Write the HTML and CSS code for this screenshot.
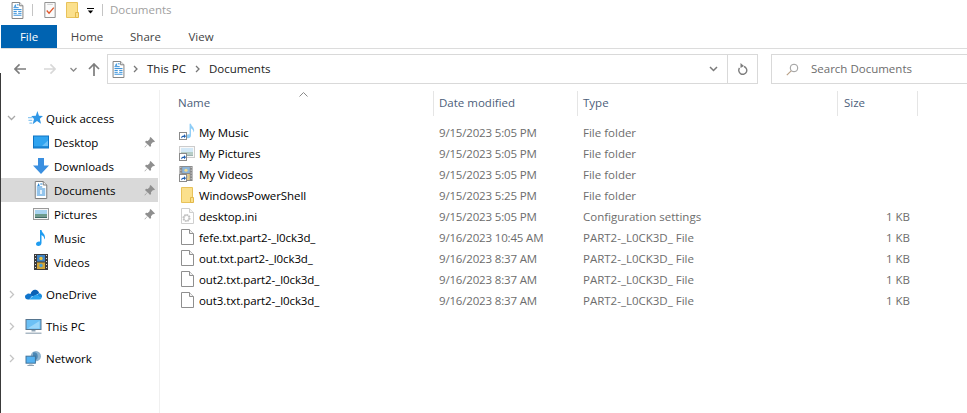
FILE: index.html
```html
<!DOCTYPE html>
<html lang="en">
<head>
<meta charset="utf-8">
<title>Documents</title>
<link rel="stylesheet" href="styles.css">
</head>
<body>
<svg class="defs" width="0" height="0" aria-hidden="true">
  <defs>
    <symbol id="i-doc" viewBox="2 0 12.500 18">
      <path d="M2.500.5h8l3.500 3.500v13.500H2.500z" fill="#fff" stroke="#7d7d7d"/>
      <path d="M10.500.5v3.500H14" fill="#eee" stroke="#7d7d7d"/>
      <path d="M7.500 3h2M4 6h5.500M4 8h8.500M4 10h3.500M9 10h3.500M4 12h3.500M9 12h3.500M4 14h8.500" stroke="#2a8ad8" stroke-width="1"/>
      <path d="M4.500 5l1.500-3 1 3z" fill="#2a8ad8"/>
    </symbol>
    <symbol id="i-check" viewBox="1 0 12 17">
      <path d="M1.500.5h11v16h-11z" fill="#fbfbfb" stroke="#8a8a8a"/>
      <path d="M4 2.500h6" stroke="#c9c9c9"/>
      <path d="M3.500 9l2.500 3 5-6" fill="none" stroke="#e0562a" stroke-width="1.400"/>
    </symbol>
    <symbol id="i-folder" viewBox="0 0 13 16">
      <path d="M.5.500h11v15H.500z" fill="#fbe08c" stroke="#e8c25a"/>
      <path d="M9.500 15.500v-5h3v5z" fill="#fbe08c" stroke="#e3b94a"/>
    </symbol>
    <symbol id="i-star" viewBox="0 0 16 16">
      <path d="M10 0l1.700 5 4.300.2-3.400 3 1.300 5.300-4.300-2.800-4.600 3.300 1.400-5.500L3.500 5.300 8.300 5z" fill="#2f97e6"/>
      <path d="M0 7h5M.5 10h4M1.500 13h3" stroke="#8cc8f2" stroke-width="1.300"/>
    </symbol>
    <symbol id="i-desktop" viewBox="0 0 16 13">
      <rect x=".5" y=".5" width="15" height="12" fill="#30a4f0" stroke="#0f74c4"/>
      <path d="M1 11h14v1H1z" fill="#0f74c4"/>
      <path d="M9 10.500L15 5v5.500z" fill="#6cc1f7"/>
    </symbol>
    <symbol id="i-down" viewBox="0 0 16 16">
      <path d="M5 0h6v7.500h5L8 16 0 7.500h5z" fill="#3a8fe0"/>
    </symbol>
    <symbol id="i-pic" viewBox="0 0 16 12">
      <rect x=".5" y=".5" width="15" height="11" fill="#f5f5f5" stroke="#9a9a9a"/>
      <path d="M2 2h12v4H2z" fill="#a8d3ef"/>
      <path d="M2 6h12v2.500H2z" fill="#6d9c8c"/>
      <path d="M2 8.500h12V10H2z" fill="#3e6b63"/>
    </symbol>
    <symbol id="i-music" viewBox="0 0 12 16">
      <path d="M5 0h1.500c.5 3 3.500 3.500 3.500 7.500 0 1-.3 1.500-.7 2 .1-2.500-1.300-3.700-2.800-4.500V13c0 1.800-1.500 3-3.200 3C2 16 1 15.200 1 14c0-1.500 1.500-2.500 3-2.500.4 0 .7.100 1 .2z" fill="#1f9cf0"/>
    </symbol>
    <symbol id="i-video" viewBox="0 0 14 16">
      <rect x="0" y="0" width="14" height="16" fill="#3c3c3c"/>
      <path d="M1 1.500h1M1 4.500h1M1 7.500h1M1 10.500h1M1 13.500h1M12 1.500h1M12 4.500h1M12 7.500h1M12 10.500h1M12 13.500h1" stroke="#ddd"/>
      <rect x="3" y="1" width="8" height="6.500" fill="#3f84c4"/>
      <rect x="3" y="8.500" width="8" height="6.500" fill="#d0a53a"/>
      <circle cx="7" cy="4.500" r="1.700" fill="#e8c33f"/>
      <circle cx="7" cy="11.500" r="1.700" fill="#4aa0d8"/>
    </symbol>
    <symbol id="i-pin" viewBox="0 0 10 10">
      <path d="M6 0l4 4-1 .8-.8-.2L6.300 6.500 6.500 8l-1 1L3.300 6.700.8 9.500l-.3-.3L3 6.700.9 4.500l1-1 1.500.2L5.300 1.800 5.100 1z" fill="#8f8f8f"/>
    </symbol>
    <symbol id="i-cloud" viewBox="0 0 17 12">
      <path d="M2 5.500C3 5 4.300 5 5.500 5.600 6.300 2 9 .5 11.500 1.500c1.300.5 2.300 1.500 2.600 3.200L8.500 8 6 7z" fill="#0a62b5"/>
      <path d="M14 4.800c1.800.1 3 1.300 3 3 0 .8-.3 1.400-.8 2L11.500 7z" fill="#1a8ee0"/>
      <path d="M2.500 5.500C3.700 5 5 5.300 6 6l1.500 1-3.300 4H3C1.200 11 0 9.800 0 8.200 0 7 1 5.800 2.500 5.500z" fill="#0f74cc"/>
      <path d="M4 11l4-3.500 3.500-1.500 5 4c-.5.600-1.200 1-2 1z" fill="#2aa4ee"/>
    </symbol>
    <symbol id="i-pc" viewBox="0 0 16 15">
      <rect x=".5" y=".5" width="15" height="10" fill="#6cc0f5" stroke="#56758f"/>
      <path d="M2 9.500L14 2v7.500z" fill="#9ad6fa"/>
      <path d="M6 11h4v1.500H6z" fill="#8fa3b3"/>
      <path d="M0 13.500h16V15H0z" fill="#aab8c4"/>
    </symbol>
    <symbol id="i-net" viewBox="0 0 17 16">
      <circle cx="11" cy="5.500" r="5.500" fill="#8fb4cf"/>
      <path d="M8 1.500c3-.5 5 1 5 4s-1.500 4-3 4.500c.5-2-.5-3-2-3.500z" fill="#4a87b5"/>
      <rect x=".5" y="5.500" width="10" height="7.500" fill="#54b2f2" stroke="#3f6f95"/>
      <path d="M3.500 13.500h4v1h-4zM2 15h7v1H2z" fill="#8fa3b3"/>
    </symbol>
    <symbol id="i-link" viewBox="0 0 8 8">
      <rect x=".5" y=".5" width="7" height="7" fill="#fff" stroke="#8a8a8a"/>
      <path d="M2 6.500C2 4.500 3 3.500 5 3.500V2l2 2.200-2 2V5C3.500 5 2.800 5.500 2 6.500z" fill="#1f5fb0"/>
    </symbol>
    <symbol id="i-file" viewBox="0 0 13 16">
      <path d="M.5.500h8l4 4v11H.500z" fill="#fff" stroke="#8f8f8f"/>
      <path d="M8.500.500v4h4" fill="#f1f1f1" stroke="#8f8f8f"/>
    </symbol>
    <symbol id="i-ini" viewBox="0 0 13 16">
      <path d="M.5.500h8l4 4v11H.500z" fill="#fff" stroke="#cfcfcf"/>
      <path d="M8.500.500v4h4" fill="#f4f4f4" stroke="#cfcfcf"/>
      <circle cx="5.500" cy="10" r="3" fill="none" stroke="#bdbdbd" stroke-width="2" stroke-dasharray="1.500 .8"/>
      <circle cx="5.500" cy="10" r="2.800" fill="none" stroke="#c8c8c8"/>
    </symbol>
  </defs>
</svg>

<div class="window">
  <header class="titlebar">
    <svg class="qa-doc"><use href="#i-doc"/></svg>
    <span class="qa-sep"></span>
    <svg class="qa-check"><use href="#i-check"/></svg>
    <svg class="qa-folder"><use href="#i-folder"/></svg>
    <svg class="qa-more" viewBox="0 0 7 6"><path d="M0 .5h7" stroke="#000"/><path d="M.8 2.500h5.400L3.500 5.500z" fill="#000"/></svg>
    <span class="qa-sep qa-sep-2"></span>
    <span class="title">Documents</span>
  </header>

  <nav class="tabs">
    <span class="tab tab-file">File</span>
    <span class="tab tab-home">Home</span>
    <span class="tab tab-share">Share</span>
    <span class="tab tab-view">View</span>
  </nav>

  <div class="navrow">
    <div class="navbtns">
      <svg class="nav-back" viewBox="0 0 13 12"><path d="M6 1L1 6l5 5M1 6h12" fill="none" stroke="#7d7d7d" stroke-width="1.700"/></svg>
      <svg class="nav-fwd" viewBox="0 0 13 12"><path d="M7 1l5 5-5 5M12 6H0" fill="none" stroke="#d8d8d8" stroke-width="1.700"/></svg>
      <svg class="nav-drop" viewBox="0 0 7 5"><path d="M.5 1L3.500 4l3-3" fill="none" stroke="#8a8a8a" stroke-width="1.300"/></svg>
      <svg class="nav-up" viewBox="0 0 12 13"><path d="M1 6l5-5 5 5M6 1v12" fill="none" stroke="#7d7d7d" stroke-width="1.700"/></svg>
    </div>
    <div class="address">
      <svg class="addr-doc"><use href="#i-doc"/></svg>
      <svg class="crumb-sep" viewBox="0 0 5 8"><path d="M1 1l3 3-3 3" fill="none" stroke="#777" stroke-width="1.300"/></svg>
      <span class="crumb">This PC</span>
      <svg class="crumb-sep" viewBox="0 0 5 8"><path d="M1 1l3 3-3 3" fill="none" stroke="#777" stroke-width="1.300"/></svg>
      <span class="crumb">Documents</span>
      <svg class="addr-drop" viewBox="0 0 9 6"><path d="M1 1l3.500 3.500L8 1" fill="none" stroke="#7a7a7a" stroke-width="1.500"/></svg>
      <span class="refresh">
        <svg viewBox="0 0 11 12" width="11" height="12"><path d="M6.500 2.500A4 4 0 1 1 2 4" fill="none" stroke="#7d7d7d" stroke-width="1.400" transform="translate(.5 1)"/><path d="M3.500 0l3.500 3-3.500 2z" fill="#7d7d7d"/></svg>
      </span>
    </div>
    <div class="search">
      <svg class="search-icon" viewBox="0 0 13 13"><circle cx="8" cy="5" r="3.800" fill="none" stroke="#9b9b9b"/><path d="M5.200 7.800L.8 12.200" stroke="#b89f85" stroke-width="1.100"/></svg>
      <span class="search-text">Search Documents</span>
    </div>
  </div>

  <div class="body">
    <aside class="sidebar">
      <div class="tree-row tree-qa">
        <svg class="chev" viewBox="0 0 9 6"><path d="M1 1l3.500 3.500L8 1" fill="none" stroke="#a8a8a8" stroke-width="1.300"/></svg>
        <svg class="t-ico"><use href="#i-star"/></svg>
        <span>Quick access</span>
      </div>
      <div class="tree-row sub"><svg class="t-ico"><use href="#i-desktop"/></svg><span class="grow">Desktop</span><svg class="pin"><use href="#i-pin"/></svg></div>
      <div class="tree-row sub"><svg class="t-ico"><use href="#i-down"/></svg><span class="grow">Downloads</span><svg class="pin"><use href="#i-pin"/></svg></div>
      <div class="tree-row sub selected"><svg class="t-ico t-doc"><use href="#i-doc"/></svg><span class="grow">Documents</span><svg class="pin"><use href="#i-pin"/></svg></div>
      <div class="tree-row sub"><svg class="t-ico"><use href="#i-pic"/></svg><span class="grow">Pictures</span><svg class="pin"><use href="#i-pin"/></svg></div>
      <div class="tree-row sub"><svg class="t-ico"><use href="#i-music"/></svg><span class="grow">Music</span></div>
      <div class="tree-row sub"><svg class="t-ico"><use href="#i-video"/></svg><span class="grow">Videos</span></div>
      <div class="tree-row top first-top">
        <svg class="chev-r" viewBox="0 0 6 9"><path d="M1 1l3.500 3.500L1 8" fill="none" stroke="#c4c4c4" stroke-width="1.300"/></svg>
        <svg class="t-ico"><use href="#i-cloud"/></svg><span>OneDrive</span>
      </div>
      <div class="tree-row top">
        <svg class="chev-r" viewBox="0 0 6 9"><path d="M1 1l3.500 3.500L1 8" fill="none" stroke="#c4c4c4" stroke-width="1.300"/></svg>
        <svg class="t-ico"><use href="#i-pc"/></svg><span>This PC</span>
      </div>
      <div class="tree-row top">
        <svg class="chev-r" viewBox="0 0 6 9"><path d="M1 1l3.500 3.500L1 8" fill="none" stroke="#c4c4c4" stroke-width="1.300"/></svg>
        <svg class="t-ico"><use href="#i-net"/></svg><span>Network</span>
      </div>
    </aside>

    <main class="files">
      <svg class="sort" viewBox="0 0 9 5"><path d="M.5 4.500l4-4 4 4" fill="none" stroke="#8a8a8a"/></svg>
      <div class="head">
        <span class="hc hc-name">Name</span>
        <span class="hc">Date modified</span>
        <span class="hc">Type</span>
        <span class="hc hc-size">Size</span>
      </div>
      <div class="rows">
        <div class="row"><span class="name"><span class="ficon"><svg class="f-music"><use href="#i-music"/></svg><svg class="f-link"><use href="#i-link"/></svg></span>My Music</span><span class="cell date">9/15/2023 5:05 PM</span><span class="cell">File folder</span><span class="size"></span></div>
        <div class="row"><span class="name"><span class="ficon"><svg class="f-pic"><use href="#i-pic"/></svg><svg class="f-link"><use href="#i-link"/></svg></span>My Pictures</span><span class="cell date">9/15/2023 5:05 PM</span><span class="cell">File folder</span><span class="size"></span></div>
        <div class="row"><span class="name"><span class="ficon"><svg class="f-video"><use href="#i-video"/></svg><svg class="f-link"><use href="#i-link"/></svg></span>My Videos</span><span class="cell date">9/15/2023 5:05 PM</span><span class="cell">File folder</span><span class="size"></span></div>
        <div class="row"><span class="name"><span class="ficon"><svg class="f-file"><use href="#i-folder"/></svg></span>WindowsPowerShell</span><span class="cell date">9/15/2023 5:25 PM</span><span class="cell">File folder</span><span class="size"></span></div>
        <div class="row"><span class="name"><span class="ficon"><svg class="f-file"><use href="#i-ini"/></svg></span>desktop.ini</span><span class="cell date">9/15/2023 5:05 PM</span><span class="cell">Configuration settings</span><span class="size">1 KB</span></div>
        <div class="row"><span class="name"><span class="ficon"><svg class="f-file"><use href="#i-file"/></svg></span>fefe.txt.part2-_l0ck3d_</span><span class="cell date">9/16/2023 10:45 AM</span><span class="cell">PART2-_L0CK3D_ File</span><span class="size">1 KB</span></div>
        <div class="row"><span class="name"><span class="ficon"><svg class="f-file"><use href="#i-file"/></svg></span>out.txt.part2-_l0ck3d_</span><span class="cell date">9/16/2023 8:37 AM</span><span class="cell">PART2-_L0CK3D_ File</span><span class="size">1 KB</span></div>
        <div class="row"><span class="name"><span class="ficon"><svg class="f-file"><use href="#i-file"/></svg></span>out2.txt.part2-_l0ck3d_</span><span class="cell date">9/16/2023 8:37 AM</span><span class="cell">PART2-_L0CK3D_ File</span><span class="size">1 KB</span></div>
        <div class="row"><span class="name"><span class="ficon"><svg class="f-file"><use href="#i-file"/></svg></span>out3.txt.part2-_l0ck3d_</span><span class="cell date">9/16/2023 8:37 AM</span><span class="cell">PART2-_L0CK3D_ File</span><span class="size">1 KB</span></div>
      </div>
    </main>
  </div>
</div>
</body>
</html>
```

FILE: styles.css
```css
* { box-sizing: border-box; }
html, body { margin: 0; height: 100%; overflow: hidden; }
body { background: #fff; font-family: "Open Sans", "Noto Sans", "Liberation Sans", sans-serif; font-size: 11.5px; color: #000; }
svg { display: block; flex: none; }
.defs { position: absolute; }

.window { position: relative; width: 967px; height: 413px; display: flex; flex-direction: column; border-left: 1px solid transparent; }
.window::before { content: ""; position: absolute; left: -1px; top: 73px; bottom: 0; width: 1px; background: #3a3a3a; }

.titlebar { height: 25px; display: flex; align-items: center; padding: 0 0 5px 10px; background: #fff; }
.qa-doc { width: 13px; height: 17px; }
.qa-sep { width: 1px; height: 12px; background: #c4c4c4; margin-left: 8px; }
.qa-check { width: 12px; height: 16px; margin-left: 11px; }
.qa-folder { width: 13px; height: 16px; margin-left: 10px; }
.qa-more { width: 7px; height: 6px; margin-left: 8px; margin-top: 2px; }
.qa-sep-2 { margin-left: 8px; }
.title { color: #9f9f9f; margin-left: 7px; padding-bottom: 1px; }

.tabs { height: 24px; display: flex; border-bottom: 1px solid #dcdcdc; }
.tab { display: flex; align-items: center; justify-content: center; color: #444; height: 23px; }
.tab-file { width: 56px; background: #0063b1; color: #fff; }
.tab-home { width: 60px; }
.tab-share { width: 57px; }
.tab-view { width: 54px; }

.navrow { height: 41px; display: flex; padding-top: 5px; align-items: flex-start; }
.navbtns { width: 106px; height: 30px; display: flex; align-items: center; padding-left: 13px; }
.nav-back { width: 12px; height: 12px; }
.nav-fwd { width: 12px; height: 12px; margin-left: 18px; }
.nav-drop { width: 7px; height: 5px; margin-left: 14px; }
.nav-up { width: 12px; height: 13px; margin-left: 11px; }

.address { width: 651px; height: 30px; border: 1px solid #d9d9d9; display: flex; align-items: center; padding-left: 4px; }
.addr-doc { width: 13px; height: 17px; }
.crumb-sep { width: 5px; height: 8px; margin-left: 8px; }
.crumb { margin-left: 9px; color: #1a1a1a; padding-bottom: 2px; }
.crumb + .crumb-sep { margin-left: 9px; }
.addr-drop { width: 9px; height: 6px; margin-left: auto; margin-right: 9px; }
.refresh { width: 30px; height: 28px; border-left: 1px solid #d9d9d9; display: flex; align-items: center; justify-content: center; }

.search { width: 196px; height: 30px; margin-left: 13px; border: 1px solid #d9d9d9; border-right: 0; display: flex; align-items: center; padding-left: 14px; color: #6d6d6d; }
.search-icon { width: 13px; height: 13px; }
.search-text { margin-left: 12px; padding-bottom: 2px; }

.body { flex: 1; display: flex; min-height: 0; }

.sidebar { width: 159px; border-right: 1px solid #f0f0f0; padding-top: 16px; }
.tree-row { height: 24px; display: flex; align-items: center; color: #000; }
.chev { width: 9px; height: 6px; margin-left: 6px; }
.chev-r { width: 6px; height: 9px; margin-left: 8px; }
.tree-qa .t-ico { width: 15px; height: 15px; margin-left: 12px; margin-right: 3px; }
.sub { padding-left: 32px; width: 157px; padding-right: 3px; }
.sub .t-ico { width: 16px; height: 16px; margin-right: 5px; }
.sub .t-doc { height: 18px; }
.grow { flex: 1; }
.pin { width: 11px; height: 11px; }
.selected { background: #d9d9d9; }
.top { height: 32px; }
.top .t-ico { width: 17px; height: 15px; margin-left: 10px; margin-right: 4px; }
.first-top { margin-top: 4px; }

.files { flex: 1; padding-left: 18px; position: relative; }
.sort { position: absolute; left: 139px; top: 2px; width: 9px; height: 5px; }
.head { height: 25px; margin-top: 1px; display: grid; grid-template-columns: 255px 144px 260px 80px; width: 740px; }
.hc { display: flex; align-items: center; padding: 0 0 2px 5px; border-left: 1px solid #e5e5e5; color: #4c607a; }
.hc-name { padding-left: 0; border-left: 0; }
.hc-size { padding-left: 6px; border-right: 1px solid #e5e5e5; width: 81px; }
.rows { margin-top: 6px; }
.row { height: 21px; display: grid; grid-template-columns: 255px 144px 260px 80px; align-items: center; width: 740px; }
.name { display: flex; align-items: center; padding-left: 3px; color: #000; letter-spacing: -.08px; padding-bottom: 1px; }
.ficon { width: 18px; height: 16px; position: relative; flex: none; }
.f-file { width: 13px; height: 16px; }
.f-music { position: absolute; left: 4px; top: -1px; width: 11px; height: 16px; opacity: .5; }
.f-pic { position: absolute; left: -2px; top: 1px; width: 16px; height: 12px; opacity: .5; }
.f-video { position: absolute; left: -2px; top: 0; width: 14px; height: 15px; opacity: .6; }
.f-link { position: absolute; left: -2px; top: 8px; width: 8px; height: 8px; }
.cell { padding: 0 0 1px 6px; color: #6d6d6d; }
.date { letter-spacing: -.17px; }
.size { text-align: right; padding: 0 7px 1px 0; color: #6d6d6d; }
```
